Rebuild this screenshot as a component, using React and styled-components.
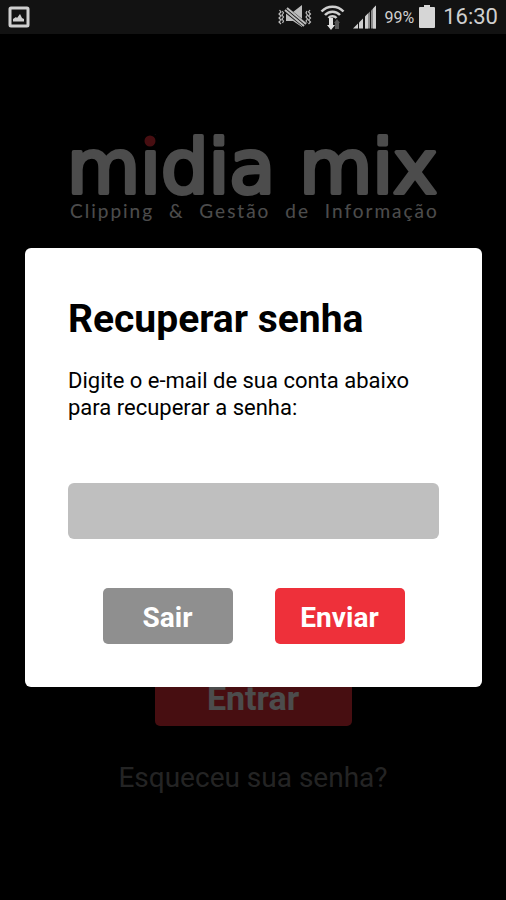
import React, { useState } from "react";
import styled, { createGlobalStyle } from "styled-components";

const GlobalStyle = createGlobalStyle`
  * {
    box-sizing: border-box;
  }
  body {
    margin: 0;
    background: #000;
    font-family: Roboto, "Liberation Sans", sans-serif;
  }
`;

const Screen = styled.div`
  display: flex;
  flex-direction: column;
  min-height: 100vh;
`;

const StatusBar = styled.header`
  display: flex;
  align-items: center;
  justify-content: space-between;
  height: 34px;
  padding: 0 8px;
  background: #121212;
  color: #cfcfcf;
`;

const StatusGroup = styled.div`
  display: flex;
  align-items: center;
  gap: ${({ gap }) => gap || 8}px;
`;

const Battery = styled.span`
  font-size: 16px;
`;

const Clock = styled.time`
  font-size: 22px;
  line-height: 34px;
`;

const Main = styled.main`
  position: relative;
  flex: 1;
  display: flex;
  flex-direction: column;
`;

const LoginForm = styled.form`
  display: flex;
  flex-direction: column;
  align-items: center;
  padding: 86px 68px 0;
`;

const Brand = styled.div`
  width: 100%;
  max-width: 370px;

  svg {
    display: block;
    width: 100%;
  }
`;

const Fields = styled.div`
  display: flex;
  flex-direction: column;
  gap: 42px;
  width: 100%;
  padding: 186px 0 100px;
`;

const Field = styled.input`
  width: 100%;
  height: 56px;
  padding: 0 16px;
  border: 0;
  border-radius: 6px;
  background: #bfbfbf;
  font-family: inherit;
  font-size: 22px;
`;

const Button = styled.button`
  width: ${({ wide }) => (wide ? 197 : 130)}px;
  height: 56px;
  padding: ${({ wide }) => (wide ? 0 : 4)}px 0 0;
  border: 0;
  border-radius: 5px;
  background: ${({ muted }) => (muted ? "#8f8f8f" : "#ee303a")};
  color: #fff;
  font-family: inherit;
  font-size: ${({ wide }) => (wide ? 34 : 28)}px;
  font-weight: 700;
  cursor: pointer;
`;

const ForgotLink = styled.a`
  margin-top: 34px;
  color: #787878;
  font-size: 28px;
  line-height: 36px;
  text-decoration: none;
`;

const Overlay = styled.div`
  position: absolute;
  inset: 0;
  display: flex;
  align-items: center;
  padding: 0 24px 0 25px;
  background: rgba(0, 0, 0, 0.7);
`;

const Dialog = styled.form`
  width: 100%;
  padding: 48px 43px 43px;
  border-radius: 6px;
  background: #fff;
  color: #000;
`;

const Title = styled.h1`
  margin: 0;
  font-size: 39px;
  line-height: 46px;
`;

const Hint = styled.label`
  display: block;
  margin: 25px 0 62px;
  font-size: 22px;
  line-height: 27px;
`;

const Actions = styled.div`
  display: flex;
  justify-content: center;
  gap: 42px;
  margin-top: 49px;
`;

function PictureIcon() {
  return (
    <svg width="22" height="22" viewBox="0 0 22 22" aria-hidden="true">
      <rect x="2" y="2" width="18" height="18" rx="1" fill="none" stroke="#cfcfcf" strokeWidth="3" />
      <path d="M5 15.500V13l3-2 1 1 3-4 2 4 2 1v2.500z" fill="#cfcfcf" />
    </svg>
  );
}

function MuteIcon() {
  return (
    <svg width="34" height="24" viewBox="0 0 34 24" aria-hidden="true">
      <g fill="none" stroke="#bdbdbd" strokeWidth="1.200">
        <path d="M1.500 5l1.500 2-2 2 2 2-2 2 2 2-2 2 2 2M4.500 6l1 2-1.500 2 1.500 2-1.500 2 1.500 2-1 2" />
        <path d="M32 5l-1.500 2 2 2-2 2 2 2-2 2 2 2-2 2M29 6l-1 2 1.500 2-1.500 2 1.500 2-1.500 2 1 2" />
      </g>
      <path d="M8 7h7l9-7v22l-9-6H8z" fill="#bdbdbd" />
      <path d="M7 4l20 16" stroke="#121212" strokeWidth="6" />
      <path d="M7 5l19 16M9 3l19 16" stroke="#bdbdbd" strokeWidth="2" />
    </svg>
  );
}

function WifiIcon() {
  return (
    <svg width="25" height="26" viewBox="0 0 25 26" aria-hidden="true">
      <g fill="none" stroke="#cfcfcf" strokeWidth="2.500">
        <path d="M1.500 7.500C7.500 1 17.500 1 23.500 7.500" />
        <path d="M5 11c4-4.500 11-4.500 15 0" />
        <path d="M8.500 14c2-2.500 6-2.500 8 0" />
      </g>
      <path d="M9 14h4v7h2l-4 5-4-5h2z" fill="#e0e0e0" />
      <path d="M15 25v-6h-1l3-4 3 4h-1v6z" fill="#555" />
    </svg>
  );
}

function SignalIcon() {
  return (
    <svg width="24" height="24" viewBox="0 0 24 24" aria-hidden="true">
      <path d="M0 23.500L5 18.500v5z" fill="#cfcfcf" />
      <path d="M6 23.500V17.500l4-4v10z" fill="#cfcfcf" />
      <path d="M12 23.500V11.500l5-5v17z" fill="#8a8a8a" />
      <path d="M12 23.500V11.500l3-3v15z" fill="#cfcfcf" />
      <path d="M18 23.500V5.500l5-5v23z" fill="#8a8a8a" />
      <path d="M20 23.500V3.500l3-3v23z" fill="#cfcfcf" />
    </svg>
  );
}

function BatteryIcon() {
  return (
    <svg width="16" height="24" viewBox="0 0 16 24" aria-hidden="true">
      <path d="M5 0h6v2h4q1 0 1 1v19q0 1-1 1H1q-1 0-1-1V3q0-1 1-1h4z" fill="#d6d6d6" />
    </svg>
  );
}

function Logo() {
  return (
    <svg viewBox="0 -10 370 110" role="img" aria-label="midia mix">
      <text
        x="-1"
        y="63"
        fill="#fff"
        stroke="#fff"
        strokeWidth="4"
        strokeLinejoin="round"
        fontFamily='"DejaVu Sans", sans-serif'
        fontSize="75"
      >
        midia mix
      </text>
      <circle cx="82" cy="11" r="7" fill="#ee303a" stroke="#000" strokeWidth="3" />
      <text
        x="2"
        y="88"
        fill="#fff"
        fontFamily="Lato, sans-serif"
        fontSize="19"
        letterSpacing="2"
        wordSpacing="8"
      >
        Clipping &amp; Gestão de Informação
      </text>
    </svg>
  );
}

function RecoverDialog() {
  const [email, setEmail] = useState("");

  return (
    <Dialog role="dialog" aria-labelledby="title" onSubmit={(e) => e.preventDefault()}>
      <Title id="title">Recuperar senha</Title>
      <Hint htmlFor="email">
        Digite o e-mail de sua conta abaixo para recuperar a senha:
      </Hint>
      <Field
        id="email"
        type="email"
        value={email}
        onChange={(e) => setEmail(e.target.value)}
      />
      <Actions>
        <Button type="button" muted={1}>
          Sair
        </Button>
        <Button type="submit">Enviar</Button>
      </Actions>
    </Dialog>
  );
}

function App() {
  return (
    <Screen>
      <GlobalStyle />
      <StatusBar>
        <PictureIcon />
        <StatusGroup>
          <MuteIcon />
          <WifiIcon />
          <SignalIcon />
          <StatusGroup gap={5}>
            <Battery>99%</Battery>
            <BatteryIcon />
          </StatusGroup>
          <Clock>16:30</Clock>
        </StatusGroup>
      </StatusBar>
      <Main>
        <LoginForm>
          <Brand>
            <Logo />
          </Brand>
          <Fields>
            <Field type="text" aria-label="Login" />
            <Field type="password" aria-label="Senha" />
          </Fields>
          <Button type="button" wide={1}>
            Entrar
          </Button>
          <ForgotLink href="#">Esqueceu sua senha?</ForgotLink>
        </LoginForm>
        <Overlay>
          <RecoverDialog />
        </Overlay>
      </Main>
    </Screen>
  );
}

export default App;
